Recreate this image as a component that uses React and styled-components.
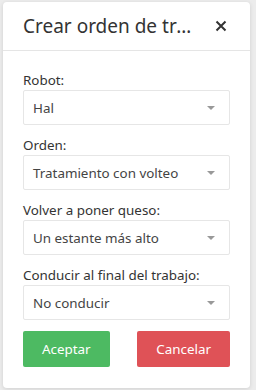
import React from 'react';
import styled, { createGlobalStyle } from 'styled-components';

const GlobalStyle = createGlobalStyle`
    html, body {
        margin: 0;
        padding: 0;
        background: #ececec;
        font-family: "Noto Sans", "Open Sans", sans-serif;
        color: #333;
    }
`

const Page = styled.div`
    width: 256px;
    height: 390px;
    padding: 2px 6px 2px 3px;
    box-sizing: border-box;
`

const Modal = styled.div`
    background: #fff;
    border-radius: 4px;
    box-shadow: 0 1px 4px rgba(0, 0, 0, 0.12);
    height: 100%;
    display: flex;
    flex-direction: column;
`

const Header = styled.div`
    height: 48px;
    display: flex;
    align-items: center;
    padding: 0 20px;
    border-bottom: 1px solid #e5e5e5;
    gap: 14px;
`

const Title = styled.h4`
    flex: 1;
    min-width: 0;
    margin: 0;
    font-size: 19px;
    font-weight: 400;
    color: #333;
    white-space: nowrap;
    overflow: hidden;
    text-overflow: ellipsis;
`

const Close = styled.button`
    border: none;
    background: none;
    padding: 0;
    width: 14px;
    height: 14px;
    display: flex;
    align-items: center;
    justify-content: center;
    margin-right: 2px;
`

const Body = styled.div`
    padding: 19px 20px 20px;
    display: flex;
    flex-direction: column;
`

const Field = styled.div`
    display: flex;
    flex-direction: column;
    margin-bottom: 10px;
`

const Label = styled.label`
    font-size: 13.4px;
    line-height: 20px;
    color: #333;
`

const Select = styled.div`
    height: 35px;
    box-sizing: border-box;
    border: 1px solid #e6e6e6;
    border-radius: 2px;
    display: flex;
    align-items: center;
    justify-content: space-between;
    padding: 0 14px 0 9px;
    font-size: 13.4px;
    color: #444;
`

const Caret = styled.span`
    width: 0;
    height: 0;
    border-left: 4px solid transparent;
    border-right: 4px solid transparent;
    border-top: 4px solid #999;
`

const Actions = styled.div`
    display: flex;
    justify-content: space-between;
    margin-top: 1px;
`

const Button = styled.button`
    height: 36px;
    padding: 0 19px;
    border: none;
    border-radius: 2px;
    font-family: inherit;
    font-size: 13.4px;
    color: #fff;
    background: ${props => props.danger ? '#df5257' : '#4dba62'};
`

const fields = [
    { label: 'Robot:', value: 'Hal' },
    { label: 'Orden:', value: 'Tratamiento con volteo' },
    { label: 'Volver a poner queso:', value: 'Un estante más alto' },
    { label: 'Conducir al final del trabajo:', value: 'No conducir' },
]

const App = () => {
    return (
        <Page>
            <GlobalStyle />
            <Modal>
                <Header>
                    <Title>Crear orden de trabajo</Title>
                    <Close>
                        <svg width="12" height="12" viewBox="0 0 12 12">
                            <path d="M1.5 1.5 L10.5 10.5 M10.5 1.5 L1.5 10.5" stroke="#333" strokeWidth="2" />
                        </svg>
                    </Close>
                </Header>
                <Body>
                    {fields.map(f => (
                        <Field key={f.label}>
                            <Label>{f.label}</Label>
                            <Select>
                                <span>{f.value}</span>
                                <Caret />
                            </Select>
                        </Field>
                    ))}
                    <Actions>
                        <Button>Aceptar</Button>
                        <Button danger>Cancelar</Button>
                    </Actions>
                </Body>
            </Modal>
        </Page>
    );
};

export default App
